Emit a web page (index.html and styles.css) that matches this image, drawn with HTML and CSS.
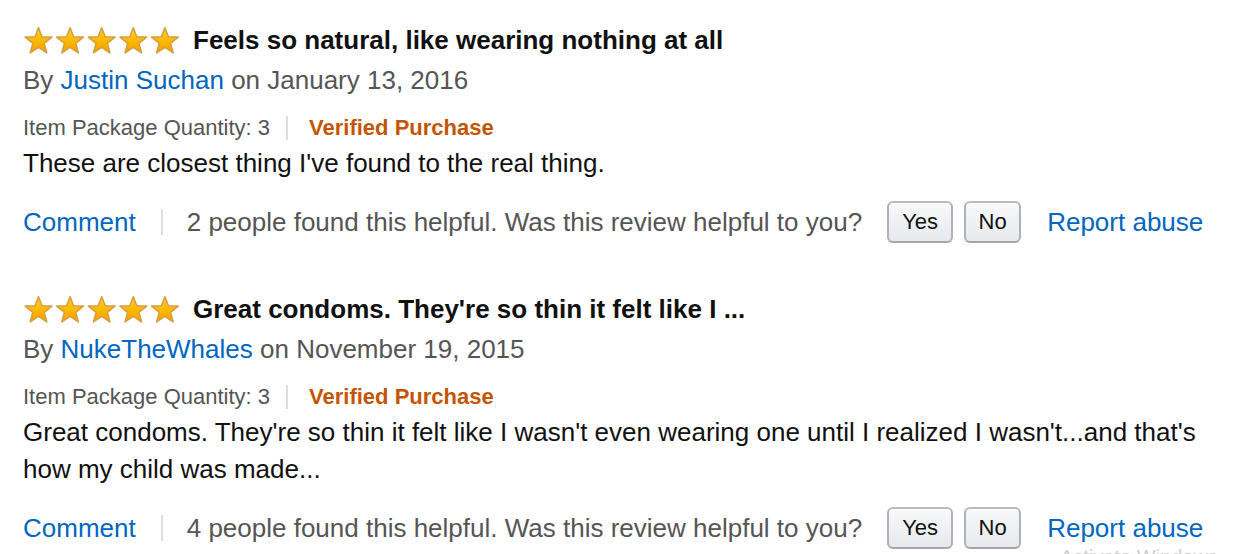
FILE: index.html
```html
<!DOCTYPE html>
<html lang="en">
<head>
<meta charset="utf-8">
<title>Reviews</title>
<link rel="stylesheet" href="styles.css">
</head>
<body>
<svg class="defs" width="0" height="0" aria-hidden="true">
  <defs>
    <linearGradient id="starFill" x1="0" y1="0" x2="0" y2="1">
      <stop offset="0" stop-color="#ffcf2e"/>
      <stop offset="0.55" stop-color="#ffb600"/>
      <stop offset="1" stop-color="#f0a000"/>
    </linearGradient>
    <symbol id="star" viewBox="0 0 31 27">
      <polygon points="15.5,0.8 18.97,9.73 28.81,10.17 21.11,16.32 23.73,25.83 15.5,20.4 7.27,25.83 9.89,16.32 2.19,10.17 12.03,9.73" fill="url(#starFill)" stroke="#d5a040" stroke-width="1.6" stroke-linejoin="round"/>
    </symbol>
  </defs>
</svg>

<main class="reviews">
  <section class="review">
    <div class="title-row">
      <svg class="stars" width="160" height="27" viewBox="0 0 160 27" aria-label="5.0 out of 5 stars">
        <use href="#star" x="0" y="0" width="31" height="27"/>
        <use href="#star" x="31.6" y="0" width="31" height="27"/>
        <use href="#star" x="63.2" y="0" width="31" height="27"/>
        <use href="#star" x="94.8" y="0" width="31" height="27"/>
        <use href="#star" x="126.4" y="0" width="31" height="27"/>
      </svg>
      <span class="title">Feels so natural, like wearing nothing at all</span>
    </div>
    <div class="byline">By <a class="link" href="#">Justin Suchan</a> on January 13, 2016</div>
    <div class="meta">
      <span>Item Package Quantity: 3</span>
      <i class="divider small"></i>
      <span class="verified">Verified Purchase</span>
    </div>
    <p class="body">These are closest thing I've found to the real thing.</p>
    <div class="actions">
      <a class="link" href="#">Comment</a>
      <i class="divider"></i>
      <span class="helpful">2 people found this helpful. Was this review helpful to you?</span>
      <button class="btn btn-yes">Yes</button>
      <button class="btn btn-no">No</button>
      <a class="link report" href="#">Report abuse</a>
    </div>
  </section>

  <section class="review second">
    <div class="title-row">
      <svg class="stars" width="160" height="27" viewBox="0 0 160 27" aria-label="5.0 out of 5 stars">
        <use href="#star" x="0" y="0" width="31" height="27"/>
        <use href="#star" x="31.6" y="0" width="31" height="27"/>
        <use href="#star" x="63.2" y="0" width="31" height="27"/>
        <use href="#star" x="94.8" y="0" width="31" height="27"/>
        <use href="#star" x="126.4" y="0" width="31" height="27"/>
      </svg>
      <span class="title">Great condoms. They're so thin it felt like I ...</span>
    </div>
    <div class="byline">By <a class="link" href="#">NukeTheWhales</a> on November 19, 2015</div>
    <div class="meta">
      <span>Item Package Quantity: 3</span>
      <i class="divider small"></i>
      <span class="verified">Verified Purchase</span>
    </div>
    <p class="body">Great condoms. They're so thin it felt like I wasn't even wearing one until I realized I wasn't...and that's how my child was made...</p>
    <div class="actions">
      <a class="link" href="#">Comment</a>
      <i class="divider"></i>
      <span class="helpful">4 people found this helpful. Was this review helpful to you?</span>
      <button class="btn btn-yes">Yes</button>
      <button class="btn btn-no">No</button>
      <a class="link report" href="#">Report abuse</a>
    </div>
  </section>
</main>

<div class="watermark">Activate Windows</div>
</body>
</html>
```

FILE: styles.css
```css
html, body {
  margin: 0;
  padding: 0;
  background: #ffffff;
}

body {
  width: 1238px;
  height: 554px;
  overflow: hidden;
  position: relative;
  font-family: "Liberation Sans", Arial, sans-serif;
  color: #111111;
}

.defs {
  position: absolute;
  width: 0;
  height: 0;
}

.reviews {
  width: 1180px;
  padding: 26px 0 0 23px;
}

.review.second {
  margin-top: 52px;
}

.title-row {
  display: flex;
  align-items: center;
  height: 28px;
}

.stars {
  display: block;
  flex: none;
  margin-top: 1px;
}

.title {
  margin-left: 10px;
  font-size: 26px;
  font-weight: bold;
  line-height: 28px;
  color: #111111;
}

.byline {
  margin-top: 7px;
  font-size: 26px;
  line-height: 38px;
  color: #555555;
}

.link {
  color: #0066c0;
  text-decoration: none;
}

.meta {
  display: flex;
  align-items: center;
  margin-top: 13px;
  height: 32px;
  font-size: 22px;
  line-height: 32px;
  color: #555555;
}

.divider {
  display: block;
  flex: none;
  width: 2px;
  height: 26px;
  background: #dddddd;
  margin: 0 24px 0 25px;
}

.divider.small {
  height: 24px;
  margin: 0 21px 0 16px;
}

.verified {
  color: #c45500;
  font-weight: bold;
}

.body {
  margin: 1px 0 0;
  font-size: 26px;
  line-height: 37px;
  color: #111111;
}

.second .body {
  margin-top: 1px;
}

.actions {
  display: flex;
  align-items: center;
  height: 42px;
  margin-top: 19px;
  font-size: 26px;
  white-space: nowrap;
}

.actions > * {
  flex: none;
}

.second .actions {
  margin-top: 19px;
}

.helpful {
  color: #555555;
}

.btn {
  box-sizing: border-box;
  height: 42px;
  padding: 0;
  border: 2px solid #adb1b8;
  border-top-color: #b7bbc2;
  border-bottom-color: #a2a6ac;
  border-radius: 6px;
  background: linear-gradient(to bottom, #f7f8fa, #e7e9ec);
  font-family: "Liberation Sans", Arial, sans-serif;
  font-size: 22px;
  color: #111111;
  box-shadow: inset 0 1px 0 rgba(255, 255, 255, 0.6);
}

.btn-yes {
  width: 66px;
  margin-left: 25px;
}

.btn-no {
  width: 57px;
  margin-left: 11px;
}

.report {
  margin-left: 26px;
}

.watermark {
  position: absolute;
  left: 1060px;
  top: 545px;
  font-size: 20px;
  line-height: 24px;
  color: #cfcfcf;
  white-space: nowrap;
}
```
